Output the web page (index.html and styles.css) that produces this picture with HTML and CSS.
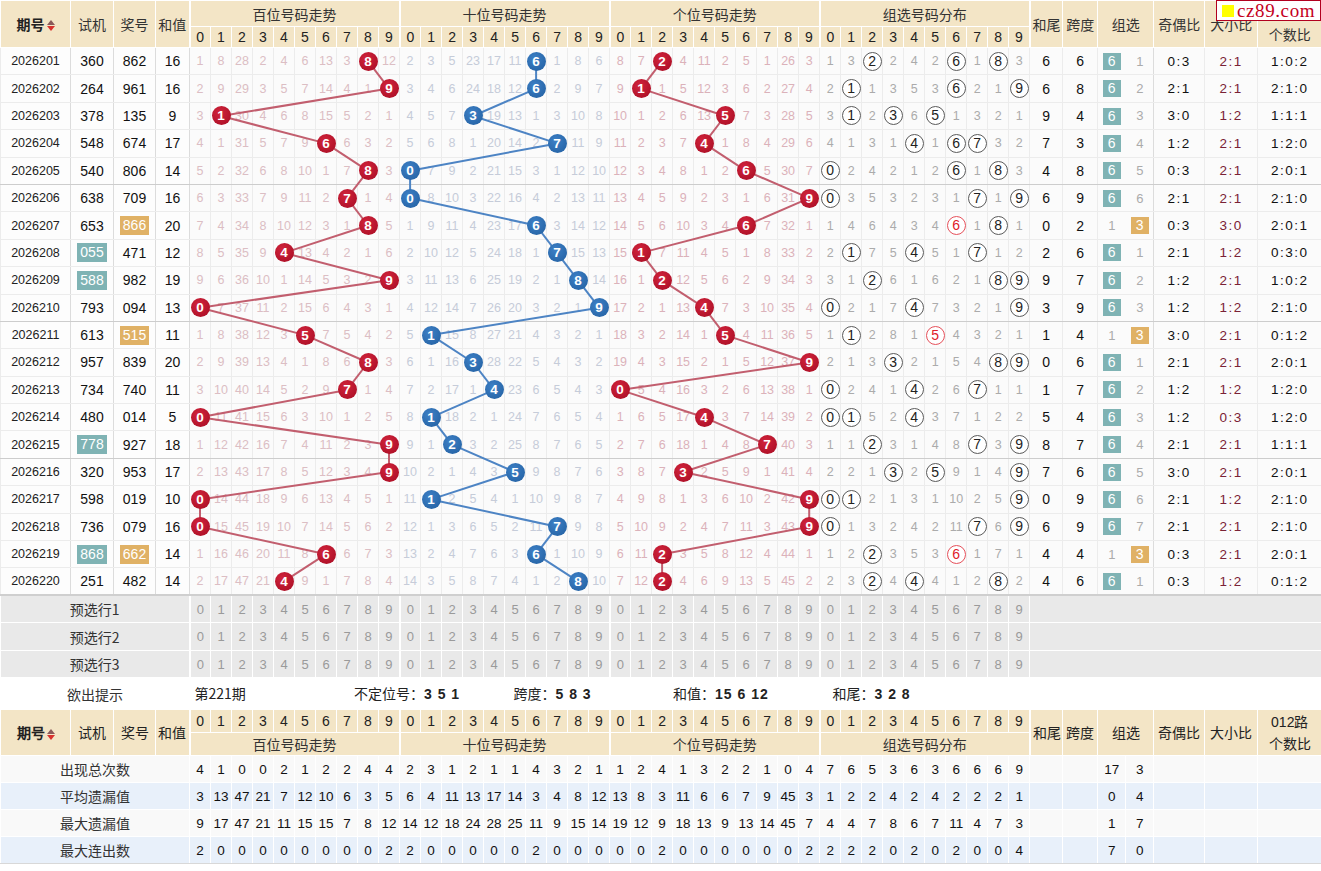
FILE: index.html
```html
<!DOCTYPE html>
<html lang="zh-CN">
<head>
<meta charset="utf-8">
<title>3D走势图</title>
<link rel="stylesheet" href="styles.css">
</head>
<body>
<div class="wrap" id="wrap">
<table class="chart">
<colgroup>
<col class="cq"><col class="cs"><col class="cj"><col class="ch">
<col class="cd"><col class="cd"><col class="cd"><col class="cd"><col class="cd"><col class="cd"><col class="cd"><col class="cd"><col class="cd"><col class="cd">
<col class="cd"><col class="cd"><col class="cd"><col class="cd"><col class="cd"><col class="cd"><col class="cd"><col class="cd"><col class="cd"><col class="cd">
<col class="cd"><col class="cd"><col class="cd"><col class="cd"><col class="cd"><col class="cd"><col class="cd"><col class="cd"><col class="cd"><col class="cd">
<col class="cd"><col class="cd"><col class="cd"><col class="cd"><col class="cd"><col class="cd"><col class="cd"><col class="cd"><col class="cd"><col class="cd">
<col class="cw"><col class="ck"><col class="cz"><col class="cz"><col class="co"><col class="cx"><col class="cr">
</colgroup>
<thead class="th-top">
<tr class="h1">
<th rowspan="2" class="hq">期号<span class="sort"><i class="up"></i><i class="dn"></i></span></th>
<th rowspan="2">试机</th><th rowspan="2">奖号</th><th rowspan="2">和值</th>
<th colspan="10" class="gs">百位号码走势</th><th colspan="10" class="gs">十位号码走势</th><th colspan="10" class="gs">个位号码走势</th><th colspan="10" class="gs">组选号码分布</th>
<th rowspan="2" class="gs">和尾</th><th rowspan="2">跨度</th><th rowspan="2" colspan="2">组选</th><th rowspan="2">奇偶比</th><th rowspan="2">大小比</th><th rowspan="2" class="two">012路<br>个数比</th>
</tr>
<tr class="h2">
<th class="gs">0</th><th>1</th><th>2</th><th>3</th><th>4</th><th>5</th><th>6</th><th>7</th><th>8</th><th>9</th>
<th class="gs">0</th><th>1</th><th>2</th><th>3</th><th>4</th><th>5</th><th>6</th><th>7</th><th>8</th><th>9</th>
<th class="gs">0</th><th>1</th><th>2</th><th>3</th><th>4</th><th>5</th><th>6</th><th>7</th><th>8</th><th>9</th>
<th class="gs">0</th><th>1</th><th>2</th><th>3</th><th>4</th><th>5</th><th>6</th><th>7</th><th>8</th><th>9</th>
</tr>
</thead>
<tbody class="data" id="data"></tbody>
<tbody class="pre" id="pre"></tbody>
<tbody class="tip">
<tr>
<td colspan="4" class="lab">欲出提示</td>
<td colspan="47" class="tipcell">
<div class="tipline">
<span>第221期</span>
<span>不定位号：<b>3 5 1</b></span>
<span>跨度：<b>5 8 3</b></span>
<span>和值：<b>15 6 12</b></span>
<span>和尾：<b>3 2 8</b></span>
</div>
</td>
</tr>
</tbody>
<tbody class="fh">
<tr class="f1">
<th rowspan="2" class="hq">期号<span class="sort"><i class="up"></i><i class="dn"></i></span></th>
<th rowspan="2">试机</th><th rowspan="2">奖号</th><th rowspan="2">和值</th>
<th class="gs">0</th><th>1</th><th>2</th><th>3</th><th>4</th><th>5</th><th>6</th><th>7</th><th>8</th><th>9</th>
<th class="gs">0</th><th>1</th><th>2</th><th>3</th><th>4</th><th>5</th><th>6</th><th>7</th><th>8</th><th>9</th>
<th class="gs">0</th><th>1</th><th>2</th><th>3</th><th>4</th><th>5</th><th>6</th><th>7</th><th>8</th><th>9</th>
<th class="gs">0</th><th>1</th><th>2</th><th>3</th><th>4</th><th>5</th><th>6</th><th>7</th><th>8</th><th>9</th>
<th rowspan="2" class="gs">和尾</th><th rowspan="2">跨度</th><th rowspan="2" colspan="2">组选</th><th rowspan="2">奇偶比</th><th rowspan="2">大小比</th><th rowspan="2" class="two2">012路<br>个数比</th>
</tr>
<tr class="f2">
<th colspan="10" class="gs">百位号码走势</th><th colspan="10" class="gs">十位号码走势</th><th colspan="10" class="gs">个位号码走势</th><th colspan="10" class="gs">组选号码分布</th>
</tr>
</tbody>
<tbody class="stats" id="stats"></tbody>
</table>
<svg class="lines" id="lines" xmlns="http://www.w3.org/2000/svg"></svg>
<div class="logo"><i></i><span>cz89.com</span></div>
</div>
<script src="script.js"></script>
</body>
</html>
```
FILE: styles.css
```css
* { box-sizing: border-box; }
body {
  margin: 0;
  background: #fff;
  font-family: "Liberation Sans", "Noto Sans CJK SC", sans-serif;
  color: #222;
}
.wrap { position: relative; width: 1321px; }
.chart {
  width: 1321px;
  table-layout: fixed;
  border-collapse: collapse;
  text-align: center;
  font-size: 13px;
}
.chart td, .chart th { padding: 0; white-space: nowrap; overflow: visible; }

col.cq { width: 70px; }
col.cs { width: 43px; }
col.cj { width: 42px; }
col.ch { width: 34px; }
col.cd { width: 21px; }
col.cw { width: 33px; }
col.ck { width: 35px; }
col.cz { width: 28px; }
col.co { width: 51px; }
col.cx { width: 53px; }
col.cr { width: 64px; }

/* header */
.chart th {
  background: #f3e5c6;
  border: 1px solid #fff;
  font-weight: normal;
  color: #333;
  font-size: 14px;
  line-height: 1;
  font-family: "Noto Sans CJK SC", sans-serif;
}
.chart th.gs { border-left: 2px solid #fff; }
.h1 { height: 26px; }
.h2 { height: 21px; }
.h2 th, .f1 th { font-family: "Liberation Sans", sans-serif; font-size: 14px; color: #222; }
.chart th.hq { font-weight: bold; color: #222; }
.chart th.two { line-height: 21px; }
.chart th.two2 { line-height: 22px; font-size: 14px; }
.sort { display: inline-block; vertical-align: middle; margin-left: 2px; width: 8px; }
.sort .up, .sort .dn { display: block; width: 0; height: 0; border-left: 4px solid transparent; border-right: 4px solid transparent; }
.sort .up { border-bottom: 5px solid #8a5a5a; }
.sort .dn { border-top: 5px solid #d8322e; margin-top: 1px; }

/* data */
.data tr { height: 27.4px; }
.data td {
  border: 1px solid #ececec;
  background: #fbfbfb;
}
.data tr.sep td { border-bottom: 1px solid #cdcdcd; }
.data td.gs { border-left: 1px solid #cdcdcd; }
.data td.qh { font-size: 12.5px; color: #222; background: #fdfdfd; border-right-color: #dcdcdc; }
.data td.sj, .data td.jh, .data td.hz { font-size: 14px; color: #111; background: #fdfdfd; border-right-color: #dcdcdc; }
.tbox, .obox {
  display: inline-block;
  height: 19px;
  line-height: 19px;
  padding: 0 3px;
  color: #fff;
}
.tbox { background: #7fb3b4; }
.obox { background: #e0b165; }
.o { font-size: 12.5px; }
.o.b { color: #dcbec4; }
.o.s { color: #c6ccd9; }
.o.g { color: #dbb2ba; }
.o.z { color: #ababab; }
.ball {
  display: inline-block;
  position: relative;
  z-index: 3;
  width: 19px;
  height: 19px;
  border-radius: 50%;
  color: #fff;
  font-weight: bold;
  font-size: 13.5px;
  line-height: 19px;
  vertical-align: middle;
}
.ball.red { background: radial-gradient(circle at 40% 35%, #d2243c, #a50b22); }
.ball.blue { background: radial-gradient(circle at 40% 35%, #3d80c6, #215e9f); }
.ring {
  display: inline-block;
  width: 19px;
  height: 19px;
  border-radius: 50%;
  border: 1.5px solid #5a5a5a;
  background: #fff;
  color: #222;
  font-size: 14px;
  line-height: 16px;
  vertical-align: middle;
}
.ring.red { border-color: #e6505a; color: #e0202a; }
.data td.rc { font-size: 14px; color: #111; }
.data td.zx { border-right-color: #fbfbfb; }
.data td.zx.r { border-left-color: #fbfbfb; border-right-color: #dcdcdc; }
.data td.om { color: #ababab; font-size: 13px; }
.g6, .g3 {
  display: inline-block;
  width: 18px;
  height: 17px;
  line-height: 17px;
  color: #fff;
  font-size: 14px;
  vertical-align: middle;
}
.g6 { background: #7fb3b4; }
.g3 { background: #e0b165; }
.data td.rat { font-size: 13.5px; letter-spacing: 1.5px; color: #111; }
.data td.rat.dx { color: #7a2236; }

/* preselect rows */
.pre tr { height: 27.5px; }
.pre td {
  background: #e9e9e9;
  border: 1px solid #fff;
  color: #9a9a9a;
  font-size: 13px;
}
.pre tr:first-child td { border-top: 2px solid #cfcfcf; }
.pre td.gs { border-left: 2px solid #fff; }
.pre td.lab, .tip td.lab, .stats td.lab {
  font-family: "Noto Sans CJK SC", sans-serif;
  font-size: 14px;
  color: #333;
}

/* tip */
.tip tr { height: 32px; }
.tip td { background: #fff; border: 0; font-size: 14px; color: #222; }
.tipline { display: flex; padding-left: 5px; font-family: "Noto Sans CJK SC", sans-serif; }
.tipline span { width: 159.5px; text-align: left; line-height: 1; }
.tipline b { font-family: "Liberation Sans", sans-serif; font-weight: bold; letter-spacing: 1px; }

/* footer header */
.f1 { height: 23px; }
.f2 { height: 23px; }

/* stats */
.stats tr { height: 27px; }
.stats td {
  border: 1px solid #fff;
  background: #f9f9f9;
  font-size: 13.5px;
  color: #111;
}
.stats tr.alt td { background: #e8f0fa; }
.stats td.gs { border-left: 1px solid #d8d8d8; }
.stats tr:last-child td { border-bottom: 1px solid #d8d8d8; }

/* overlay */
.lines {
  position: absolute;
  left: 0;
  top: 0;
  z-index: 2;
  pointer-events: none;
}
.lines .ln-r { stroke: #c25e6e; stroke-width: 2; }
.lines .ln-b { stroke: #4d84c4; stroke-width: 2; }

.logo {
  position: absolute;
  top: 0;
  left: 1216px;
  width: 105px;
  height: 21px;
  background: #fff;
  border: 1px solid #b2001f;
  display: flex;
  align-items: center;
  gap: 3px;
  padding-left: 5px;
  z-index: 5;
}
.logo i { display: block; width: 12px; height: 12px; background: #ffff00; }
.logo span {
  font-family: "Liberation Serif", serif;
  font-size: 19px;
  line-height: 1;
  color: #c4001d;
  letter-spacing: 0.6px;
}
```
FILE: script.js
```js
(function () {
  var D = [
    ["2026201","360","862"],["2026202","264","961"],["2026203","378","135"],["2026204","548","674"],
    ["2026205","540","806"],["2026206","638","709"],["2026207","653","866"],["2026208","055","471"],
    ["2026209","588","982"],["2026210","793","094"],["2026211","613","515"],["2026212","957","839"],
    ["2026213","734","740"],["2026214","480","014"],["2026215","778","927"],["2026216","320","953"],
    ["2026217","598","019"],["2026218","736","079"],["2026219","868","662"],["2026220","251","482"]
  ];
  var st = [
    [1,8,28,2,4,6,13,3,0,12],
    [2,3,5,23,17,11,0,1,8,6],
    [8,7,0,4,11,2,5,1,26,3],
    [1,3,0,2,4,2,0,1,0,3]
  ];
  var g6 = 0, g3 = 1;
  var kc = ["b","s","g","z"];
  function uniq(s) { var o = {}; s.split("").forEach(function (c) { o[c] = 1; }); return Object.keys(o).length; }
  var h = "";
  D.forEach(function (r, i) {
    var d = r[2].split("").map(Number);
    var k, c;
    if (i > 0) {
      for (k = 0; k < 4; k++) for (c = 0; c < 10; c++) st[k][c]++;
      g6++; g3++;
    }
    var sum = d[0] + d[1] + d[2];
    h += '<tr' + ((i === 4 || i === 9 || i === 14) ? ' class="sep"' : '') + '>';
    h += '<td class="qh">' + r[0] + '</td>';
    h += '<td class="sj">' + (uniq(r[1]) === 2 ? '<span class="tbox">' + r[1] + '</span>' : r[1]) + '</td>';
    h += '<td class="jh">' + (uniq(r[2]) === 2 ? '<span class="obox">' + r[2] + '</span>' : r[2]) + '</td>';
    h += '<td class="hz">' + sum + '</td>';
    for (k = 0; k < 3; k++) {
      for (c = 0; c < 10; c++) {
        var cl = 'o ' + kc[k] + (c === 0 ? ' gs' : '');
        if (d[k] === c) {
          h += '<td class="' + cl + '"><span class="ball ' + (k === 1 ? 'blue' : 'red') + '" data-g="' + k + '">' + c + '</span></td>';
          st[k][c] = 0;
        } else {
          h += '<td class="' + cl + '">' + st[k][c] + '</td>';
        }
      }
    }
    for (c = 0; c < 10; c++) {
      var n = d.filter(function (x) { return x === c; }).length;
      var cz = 'o z' + (c === 0 ? ' gs' : '');
      if (n > 0) {
        h += '<td class="' + cz + '"><span class="ring' + (n > 1 ? ' red' : '') + '">' + c + '</span></td>';
        st[3][c] = 0;
      } else {
        h += '<td class="' + cz + '">' + st[3][c] + '</td>';
      }
    }
    var u = uniq(r[2]);
    h += '<td class="rc gs">' + (sum % 10) + '</td>';
    h += '<td class="rc">' + (Math.max.apply(null, d) - Math.min.apply(null, d)) + '</td>';
    if (u === 3) { h += '<td class="zx"><span class="g6">6</span></td>'; g6 = 0; }
    else h += '<td class="zx om">' + g6 + '</td>';
    if (u === 2) { h += '<td class="zx r"><span class="g3">3</span></td>'; g3 = 0; }
    else h += '<td class="zx r om">' + g3 + '</td>';
    var odd = d.filter(function (x) { return x % 2 === 1; }).length;
    var big = d.filter(function (x) { return x >= 5; }).length;
    var m = [0, 0, 0];
    d.forEach(function (x) { m[x % 3]++; });
    h += '<td class="rat">' + odd + ':' + (3 - odd) + '</td>';
    h += '<td class="rat dx">' + big + ':' + (3 - big) + '</td>';
    h += '<td class="rat">' + m.join(':') + '</td>';
    h += '</tr>';
  });
  document.getElementById("data").innerHTML = h;

  var p = "";
  for (var i = 1; i <= 3; i++) {
    p += '<tr><td colspan="4" class="lab">预选行' + i + '</td>';
    for (var j = 0; j < 40; j++) p += '<td' + (j % 10 === 0 ? ' class="gs"' : '') + '>' + (j % 10) + '</td>';
    p += '<td colspan="7"></td></tr>';
  }
  document.getElementById("pre").innerHTML = p;

  var S = [
    ["出现总次数", [4,1,0,0,2,1,2,2,4,4, 2,3,1,2,1,1,4,3,2,1, 1,2,4,1,3,2,2,1,0,4, 7,6,5,3,6,3,6,6,6,9], [17,3]],
    ["平均遗漏值", [3,13,47,21,7,12,10,6,3,5, 6,4,11,13,17,14,3,4,8,12, 13,8,3,11,6,6,7,9,45,3, 1,2,2,4,2,4,2,2,2,1], [0,4]],
    ["最大遗漏值", [9,17,47,21,11,15,15,7,8,12, 14,12,18,24,28,25,11,9,15,14, 19,12,9,18,13,9,13,14,45,7, 4,4,7,8,6,7,11,4,7,3], [1,7]],
    ["最大连出数", [2,0,0,0,0,0,0,0,0,2, 2,0,0,0,0,0,2,0,0,0, 0,0,2,0,0,0,0,0,0,2, 2,2,2,0,2,0,2,0,0,4], [7,0]]
  ];
  var s = "";
  S.forEach(function (row, idx) {
    s += '<tr' + (idx % 2 === 1 ? ' class="alt"' : '') + '><td colspan="4" class="lab">' + row[0] + '</td>';
    row[1].forEach(function (v, j) { s += '<td' + (j % 10 === 0 ? ' class="gs"' : '') + '>' + v + '</td>'; });
    s += '<td class="gs"></td><td></td><td>' + row[2][0] + '</td><td>' + row[2][1] + '</td><td></td><td></td><td></td></tr>';
  });
  document.getElementById("stats").innerHTML = s;

  var wrap = document.getElementById("wrap");
  var wr = wrap.getBoundingClientRect();
  var svg = document.getElementById("lines");
  svg.setAttribute("width", wrap.offsetWidth);
  svg.setAttribute("height", wrap.offsetHeight);
  var rows = document.getElementById("data").rows;
  var out = "";
  for (var g = 0; g < 3; g++) {
    var prev = null;
    for (var ri = 0; ri < rows.length; ri++) {
      var b = rows[ri].querySelector('.ball[data-g="' + g + '"]');
      if (!b) continue;
      var br = b.getBoundingClientRect();
      var cx = (br.left + br.width / 2 - wr.left).toFixed(1);
      var cy = (br.top + br.height / 2 - wr.top).toFixed(1);
      if (prev) {
        out += '<line class="' + (g === 1 ? 'ln-b' : 'ln-r') + '" x1="' + prev[0] + '" y1="' + prev[1] + '" x2="' + cx + '" y2="' + cy + '"/>';
      }
      prev = [cx, cy];
    }
  }
  svg.innerHTML = out;
})();
```
